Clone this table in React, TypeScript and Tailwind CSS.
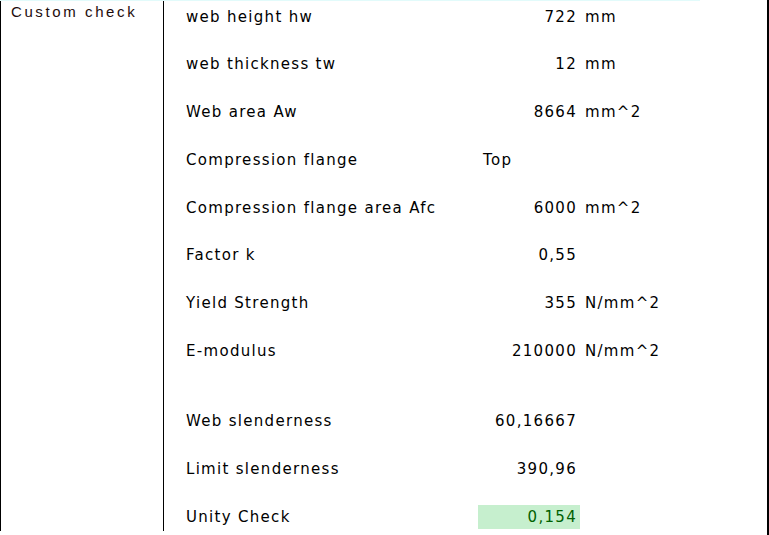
type Row = {
  label: string
  value: string
  unit?: string
  align?: 'left' | 'right'
  good?: boolean
}

const inputs: Row[] = [
  { label: 'web height hw', value: '722', unit: 'mm' },
  { label: 'web thickness tw', value: '12', unit: 'mm' },
  { label: 'Web area Aw', value: '8664', unit: 'mm^2' },
  { label: 'Compression flange', value: 'Top', align: 'left' },
  { label: 'Compression flange area Afc', value: '6000', unit: 'mm^2' },
  { label: 'Factor k', value: '0,55' },
  { label: 'Yield Strength', value: '355', unit: 'N/mm^2' },
  { label: 'E-modulus', value: '210000', unit: 'N/mm^2' },
]

const results: Row[] = [
  { label: 'Web slenderness', value: '60,16667' },
  { label: 'Limit slenderness', value: '390,96' },
  { label: 'Unity Check', value: '0,154', good: true },
]

function CheckRow({ row }: { row: Row }) {
  return (
    <div className="flex h-6 items-center">
      <div className="w-[292px] shrink-0">{row.label}</div>
      <div
        className={
          row.good
            ? 'flex h-6 w-[102px] shrink-0 items-center justify-end bg-[#c6efce] pr-[3px] text-[#006100]'
            : row.align === 'left'
              ? 'w-[102px] shrink-0 pl-[5px]'
              : 'w-[102px] shrink-0 pr-[3px] text-right'
        }
      >
        {row.value}
      </div>
      {row.unit ? <div className="pl-[5px]">{row.unit}</div> : null}
    </div>
  )
}

export default function App() {
  return (
    <div className="flex h-[535px] w-[769px] bg-white">
      <div className="flex w-[767px] flex-col">
        <div className="h-px w-[700px] bg-[#e2fbfb]" />
        <div className="flex h-[530px] border-l border-black">
          <div className="w-[163px] shrink-0 border-r border-black pl-[10px] pt-[2px] font-['Liberation_Sans',Arial,sans-serif] text-[15px] leading-[18px] tracking-[2.6px] text-[#1e0c0c]">
            Custom check
          </div>
          <div className="flex flex-col pl-[22px] pt-[4px] font-['DejaVu_Sans',sans-serif] text-[15px] tracking-[1.3px] text-black">
            <div className="flex flex-col gap-[23.7px]">
              {inputs.map((row) => (
                <CheckRow key={row.label} row={row} />
              ))}
            </div>
            <div className="mt-[46.5px] flex flex-col gap-[24px]">
              {results.map((row) => (
                <CheckRow key={row.label} row={row} />
              ))}
            </div>
          </div>
        </div>
      </div>
      <div className="h-full w-[2px] bg-black" />
    </div>
  )
}
